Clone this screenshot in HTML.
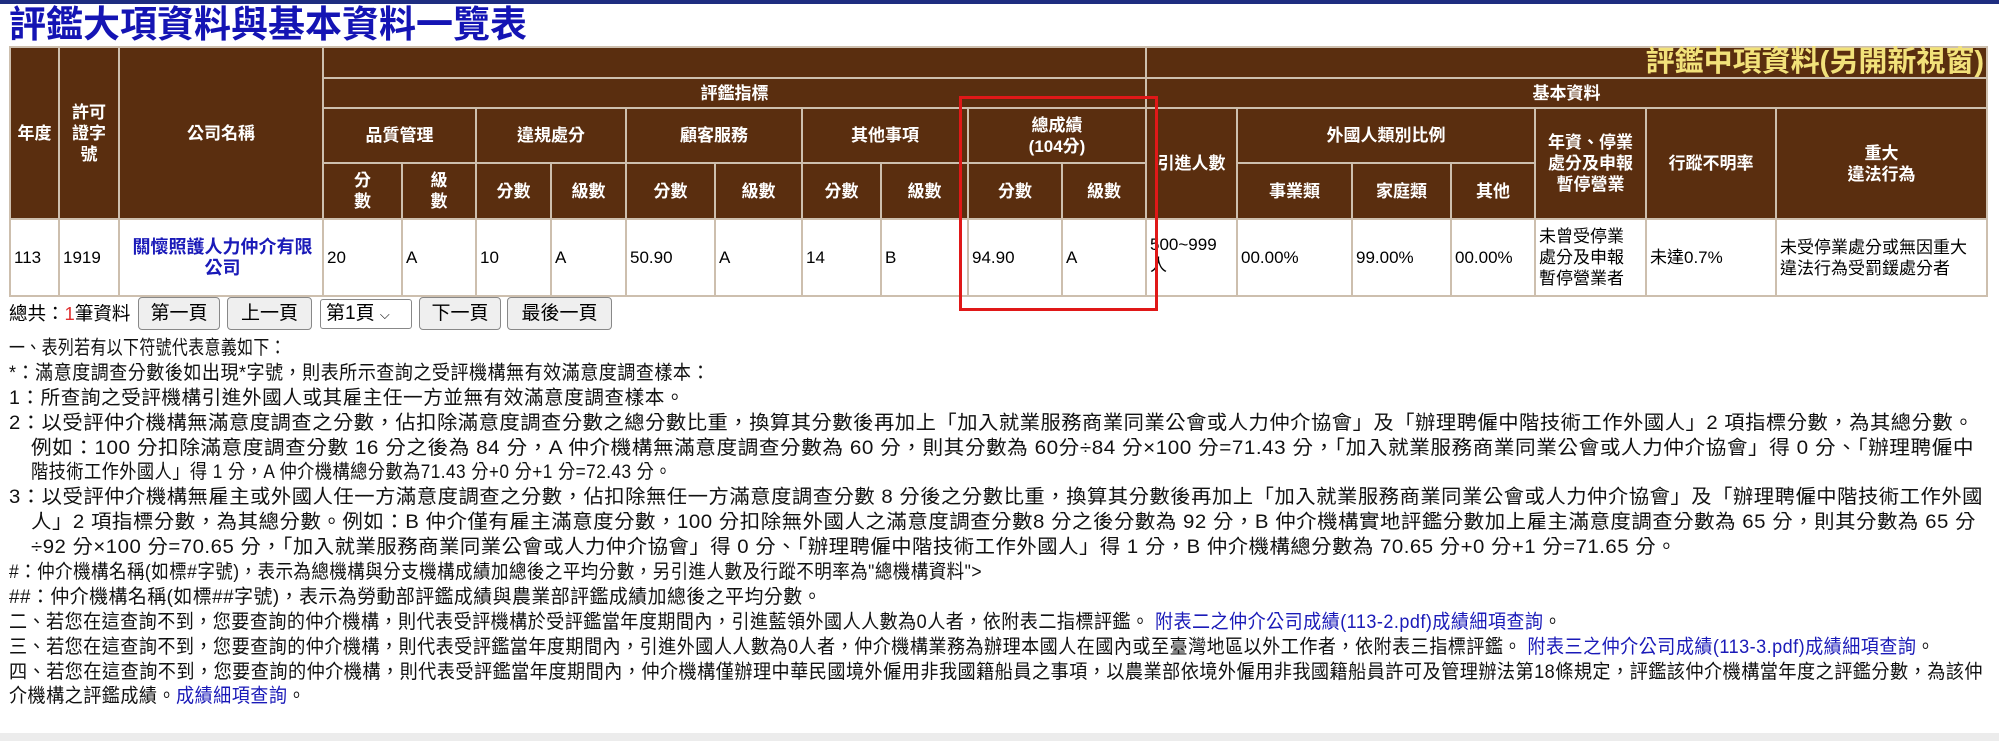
<!DOCTYPE html>
<html><head><meta charset="utf-8">
<style>
body{margin:0;width:1999px;height:741px;overflow:hidden;background:#fff;font-family:"Liberation Sans","Noto Sans CJK TC",sans-serif;position:relative}
.topbar{position:absolute;left:0;top:0;width:1999px;height:4px;background:#1e2d80}
.title{position:absolute;left:9px;top:3px;font-size:37px;font-weight:bold;color:#1414b4;line-height:44px}
table{position:absolute;left:9px;top:46px;border-collapse:collapse;table-layout:fixed}
td{border:2px solid #cdbfae;padding:0;text-align:center;font-size:17px;line-height:21px}
.h td,td.h{background:#5a2e0f;color:#fff;font-weight:bold}
.d td{background:#fff;color:#000;text-align:left;padding-left:3px;font-weight:normal}
.red{position:absolute;left:959px;top:96px;width:193px;height:209px;border:3px solid #e01818}
.lines{position:absolute;left:9px;top:336px;font-size:19.5px;line-height:24.9px;color:#111;white-space:nowrap;letter-spacing:0.5px;width:1990px}
.lines div{height:24.9px;overflow:visible}
.lines span{display:inline-block;transform-origin:0 0;vertical-align:top}
.ind{padding-left:22px}
a{color:#1a1ab8;text-decoration:none}
.btn{position:absolute;top:297px;height:33px;border:1px solid #888;border-radius:4px;background:#efefef;font-size:19px;line-height:31px;text-align:center;box-sizing:border-box}
.bottom{position:absolute;left:0;top:733px;width:1999px;height:8px;background:#ececec}
</style></head><body>
<div class="topbar"></div>
<div class="title">評鑑大項資料與基本資料一覽表</div>
<table>
<colgroup>
<col style="width:49px"><col style="width:60px"><col style="width:204px">
<col style="width:79px"><col style="width:74px"><col style="width:75px"><col style="width:75px">
<col style="width:89px"><col style="width:87px"><col style="width:79px"><col style="width:87px">
<col style="width:94px"><col style="width:84px">
<col style="width:91px"><col style="width:115px"><col style="width:99px"><col style="width:84px">
<col style="width:111px"><col style="width:130px"><col style="width:211px">
</colgroup>
<tr class="h" style="height:31px"><td rowspan="4">年度</td><td rowspan="4">許可<br>證字<br>號</td><td rowspan="4">公司名稱</td>
<td colspan="10"></td><td colspan="7" style="text-align:right;color:#f2e27a;font-size:29px;padding-right:2px">評鑑中項資料(另開新視窗)</td></tr>
<tr class="h" style="height:30px"><td colspan="10">評鑑指標</td><td colspan="7">基本資料</td></tr>
<tr class="h" style="height:55px"><td colspan="2">品質管理</td><td colspan="2">違規處分</td><td colspan="2">顧客服務</td><td colspan="2">其他事項</td><td colspan="2">總成績<br>(104分)</td>
<td rowspan="2">引進人數</td><td colspan="3">外國人類別比例</td><td rowspan="2">年資、停業<br>處分及申報<br>暫停營業</td><td rowspan="2">行蹤不明率</td><td rowspan="2">重大<br>違法行為</td></tr>
<tr class="h" style="height:56px"><td>分<br>數</td><td>級<br>數</td><td>分數</td><td>級數</td><td>分數</td><td>級數</td><td>分數</td><td>級數</td><td>分數</td><td>級數</td><td>事業類</td><td>家庭類</td><td>其他</td></tr>
<tr class="d" style="height:77px"><td>113</td><td>1919</td><td style="text-align:center;color:#1a1ab8;font-weight:bold;font-size:18px">關懷照護人力仲介有限<br>公司</td>
<td>20</td><td>A</td><td>10</td><td>A</td><td>50.90</td><td>A</td><td>14</td><td>B</td><td>94.90</td><td>A</td>
<td style="vertical-align:top;padding-top:14px">500~999<br>人</td><td>00.00%</td><td>99.00%</td><td>00.00%</td><td>未曾受停業<br>處分及申報<br>暫停營業者</td><td>未達0.7%</td><td>未受停業處分或無因重大<br>違法行為受罰鍰處分者</td></tr>
</table>
<div class="red"></div>
<div style="position:absolute;left:9px;top:302px;font-size:18.5px;line-height:24px">總共：<span style="color:#e03030">1</span>筆資料</div>
<div class="btn" style="left:138px;width:82px">第一頁</div>
<div class="btn" style="left:227px;width:85px">上一頁</div>
<div class="btn" style="left:320px;width:92px;background:#fff;border-radius:3px;top:299px;height:30px;line-height:28px;text-align:left;padding-left:5px">第1頁 <span style="font-size:13px">⌵</span></div>
<div class="btn" style="left:419px;width:82px">下一頁</div>
<div class="btn" style="left:507px;width:105px">最後一頁</div>
<div class="lines" id="ln">
<div><span>一、表列若有以下符號代表意義如下：</span></div>
<div><span>*：滿意度調查分數後如出現*字號，則表所示查詢之受評機構無有效滿意度調查樣本：</span></div>
<div><span>1：所查詢之受評機構引進外國人或其雇主任一方並無有效滿意度調查樣本。</span></div>
<div><span>2：以受評仲介機構無滿意度調查之分數，佔扣除滿意度調查分數之總分數比重，換算其分數後再加上「加入就業服務商業同業公會或人力仲介協會」及「辦理聘僱中階技術工作外國人」2 項指標分數，為其總分數。</span></div>
<div class="ind"><span>例如：100 分扣除滿意度調查分數 16 分之後為 84 分，A 仲介機構無滿意度調查分數為 60 分，則其分數為 60分÷84 分×100 分=71.43 分，「加入就業服務商業同業公會或人力仲介協會」得 0 分、「辦理聘僱中</span></div>
<div class="ind"><span>階技術工作外國人」得 1 分，A 仲介機構總分數為71.43 分+0 分+1 分=72.43 分。</span></div>
<div><span>3：以受評仲介機構無雇主或外國人任一方滿意度調查之分數，佔扣除無任一方滿意度調查分數 8 分後之分數比重，換算其分數後再加上「加入就業服務商業同業公會或人力仲介協會」及「辦理聘僱中階技術工作外國</span></div>
<div class="ind"><span>人」2 項指標分數，為其總分數。例如：B 仲介僅有雇主滿意度分數，100 分扣除無外國人之滿意度調查分數8 分之後分數為 92 分，B 仲介機構實地評鑑分數加上雇主滿意度調查分數為 65 分，則其分數為 65 分</span></div>
<div class="ind"><span>÷92 分×100 分=70.65 分，「加入就業服務商業同業公會或人力仲介協會」得 0 分、「辦理聘僱中階技術工作外國人」得 1 分，B 仲介機構總分數為 70.65 分+0 分+1 分=71.65 分。</span></div>
<div><span>#：仲介機構名稱(如標#字號)，表示為總機構與分支機構成績加總後之平均分數，另引進人數及行蹤不明率為"總機構資料"&gt;</span></div>
<div><span>##：仲介機構名稱(如標##字號)，表示為勞動部評鑑成績與農業部評鑑成績加總後之平均分數。</span></div>
<div><span>二、若您在這查詢不到，您要查詢的仲介機構，則代表受評機構於受評鑑當年度期間內，引進藍領外國人人數為0人者，依附表二指標評鑑。 <a>附表二之仲介公司成績(113-2.pdf)成績細項查詢</a>。</span></div>
<div><span>三、若您在這查詢不到，您要查詢的仲介機構，則代表受評鑑當年度期間內，引進外國人人數為0人者，仲介機構業務為辦理本國人在國內或至臺灣地區以外工作者，依附表三指標評鑑。 <a>附表三之仲介公司成績(113-3.pdf)成績細項查詢</a>。</span></div>
<div><span>四、若您在這查詢不到，您要查詢的仲介機構，則代表受評鑑當年度期間內，仲介機構僅辦理中華民國境外僱用非我國籍船員之事項，以農業部依境外僱用非我國籍船員許可及管理辦法第18條規定，評鑑該仲介機構當年度之評鑑分數，為該仲</span></div>
<div><span>介機構之評鑑成績。<a>成績細項查詢</a>。</span></div>
</div>
<div class="bottom"></div>
<script>
(function(){
var t=[286,710,685,1974,1974,672,1983,1976,1677,982,822,1562,1935,1983,306];
var s=document.querySelectorAll('#ln span');
for(var i=0;i<s.length&&i<t.length;i++){
var r=s[i].getBoundingClientRect();
var w=r.width; if(w>0){var k=(t[i]-r.left)/w; s[i].style.transform='scaleX('+k+')';}
}
})();
</script>
</body></html>
